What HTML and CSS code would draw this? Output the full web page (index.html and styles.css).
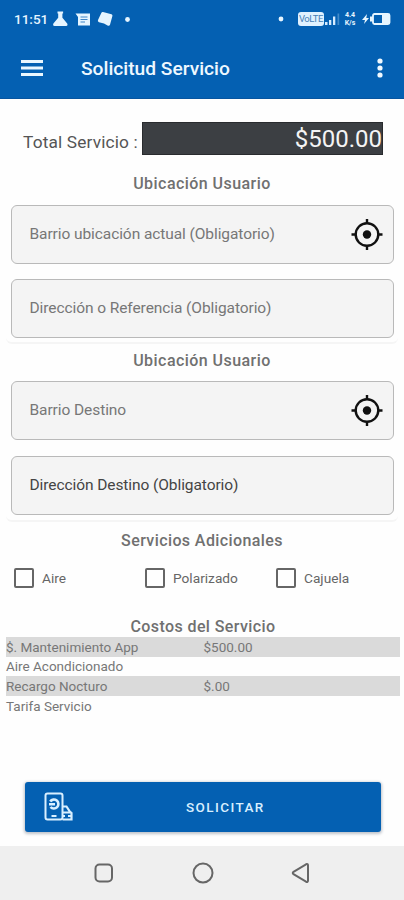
FILE: index.html
```html
<!DOCTYPE html>
<html lang="es">
<head>
<meta charset="utf-8">
<title>Solicitud Servicio</title>
<link rel="stylesheet" href="styles.css">
</head>
<body>
<header class="header">
  <div class="status">
    <span class="clock">11:51</span>
    <svg class="status-left" width="80" height="18" viewBox="0 0 80 18" fill="#e6f5ff">
      <path d="M4.500 1.500h5.600v2H9.400v4.300l4.800 5.700q1 2.500-1.200 2.500H1.700q-2.300 0-1.300-2.500l4.800-5.700V3.500h-.7z"/>
      <path d="M22.500 3.500H37v12H25V7z"/>
      <path d="M27.500 7h7M27.500 9.500h7M27.500 12h4.500" stroke="#3f86c8" stroke-width="1.200"/>
      <path d="M50 2l8.500 2.300q1.300.5.900 1.800L57 14.800q-.6 1.500-2 .9l-4-2.200-5-1.200q-1.700-.7-1-2.300l3.300-7q.5-1.300 1.700-1z"/>
      <circle cx="74.500" cy="9.500" r="2.400"/>
    </svg>
    <svg class="status-mid" width="6" height="18" viewBox="0 0 6 18" fill="#e6f5ff"><circle cx="3" cy="9" r="2.400"/></svg>
    <span class="volte">VoLTE</span>
    <svg class="signal" width="17" height="18" viewBox="0 0 17 18" fill="#d5ebff">
      <path d="M1 12h2.500v3H1zM5 10h2.300v5H5zM9 6.500h2.300V15H9z"/><path d="M13.500 3.500h1.700V15h-1.700z" opacity=".3"/>
    </svg>
    <span class="speed"><span>4.4</span><span>K/s</span></span>
    <svg class="battery" width="29" height="18" viewBox="0 0 29 18" fill="#e6f5ff">
      <path d="M5 4L0 10h3l-1 4 5-6H4.300z"/><path d="M8 6.500h3v5H8z"/>
      <rect x="11" y="4" width="16.500" height="10" rx="1.500" fill="none" stroke="#e6f5ff" stroke-width="1.800"/><path d="M20 4h7v10h-7z"/>
    </svg>
  </div>
  <div class="toolbar">
    <svg width="22" height="18" viewBox="0 0 22 18" fill="none" stroke="#eaf7ff" stroke-width="3"><path d="M0 2.500h22M0 9h22M0 15.500h22"/></svg>
    <h1>Solicitud Servicio</h1>
    <svg class="more" width="6" height="22" viewBox="0 0 6 22" fill="#f1f9ff"><circle cx="3" cy="4" r="2.600"/><circle cx="3" cy="11" r="2.600"/><circle cx="3" cy="18" r="2.600"/></svg>
  </div>
</header>
<main>
  <div class="total"><span class="total-label">Total Servicio :</span><output>$500.00</output></div>
  <section class="place">
    <h2>Ubicación Usuario</h2>
    <div class="field"><span>Barrio ubicación actual (Obligatorio)</span>
      <svg width="32" height="32" viewBox="0 0 32 32" fill="none" stroke="#111" stroke-width="2.400"><circle cx="16" cy="15.500" r="11.300"/><circle cx="16" cy="15.500" r="4.200" fill="#111" stroke="none"/><path d="M16 0v5M16 26v5M.5 15.500h5M26.500 15.500h5"/></svg>
    </div>
    <div class="field"><span>Dirección o Referencia (Obligatorio)</span></div>
  </section>
  <section class="place second">
    <h2>Ubicación Usuario</h2>
    <div class="field"><span>Barrio Destino</span>
      <svg width="32" height="32" viewBox="0 0 32 32" fill="none" stroke="#111" stroke-width="2.400"><circle cx="16" cy="15.500" r="11.300"/><circle cx="16" cy="15.500" r="4.200" fill="#111" stroke="none"/><path d="M16 0v5M16 26v5M.5 15.500h5M26.500 15.500h5"/></svg>
    </div>
    <div class="field filled"><span>Dirección Destino (Obligatorio)</span></div>
  </section>
  <section class="extras">
    <h2>Servicios Adicionales</h2>
    <div class="checks">
      <span class="check"><i></i><span>Aire</span></span>
      <span class="check"><i></i><span>Polarizado</span></span>
      <span class="check"><i></i><span>Cajuela</span></span>
    </div>
  </section>
  <section class="costs">
    <h2>Costos del Servicio</h2>
    <div class="row"><span>$. Mantenimiento App</span><span>$500.00</span></div>
    <div class="row"><span>Aire Acondicionado</span></div>
    <div class="row"><span>Recargo Nocturo</span><span>$.00</span></div>
    <div class="row"><span>Tarifa Servicio</span></div>
  </section>
  <div class="submit">
    <svg width="30" height="30" viewBox="0 0 30 30" fill="none" stroke="#d9efff" stroke-width="2">
      <rect x="2.500" y="1.500" width="17" height="26" rx="2"/>
      <path d="M7.200 9.500a4.500 4.500 0 1 1 .3 5.500M6 12.300h6" stroke-width="2.600"/><path d="M8.500 24h5"/>
      <path d="M19.500 14.500h4l3.300 5 1.700 1.500v6.500h-9M19.500 20.500h8M20 24h2M25 24h3" stroke-width="2.200"/>
    </svg>
    <span>SOLICITAR</span>
  </div>
</main>
<nav>
  <svg width="20" height="20" viewBox="0 0 20 20"><rect x="1.500" y="1.500" width="16.500" height="17" rx="4"/></svg>
  <svg width="22" height="22" viewBox="0 0 22 22"><circle cx="11" cy="11" r="9.500"/></svg>
  <svg width="20" height="22" viewBox="0 0 20 22"><path d="M2.500 9.800L15 2.300q2-.8 2 1.200v15q0 2-2 1.200L2.500 12.200q-1.500-1.200 0-2.400z"/></svg>
</nav>
</body>
</html>
```
FILE: styles.css
```css
* { box-sizing: border-box; }
body { margin: 0; width: 404px; height: 900px; overflow: hidden; display: flex; flex-direction: column; background: #fefefe; font-family: Roboto, sans-serif; color: #666; }
svg { display: block; flex: none; }
span, output, h1, h2 { white-space: nowrap; }
h1, h2 { margin: 0; }
.header { height: 99px; flex: none; background: #0460b2; border-bottom: 1px solid #0755a0; }
.status { height: 38px; display: flex; align-items: center; color: #e6f5ff; padding-left: 14px; }
.clock { width: 39px; font-size: 13.5px; font-weight: 500; }
.status-mid { margin-left: 145px; }
.volte { margin-left: 14px; width: 26px; height: 14px; border-radius: 3px; background: #e0f1ff; color: #467fb5; font-size: 9.5px; line-height: 14px; text-align: center; letter-spacing: -.4px; }
.speed { display: flex; flex-direction: column; gap: 1px; width: 14px; margin-left: 2px; font-size: 7px; line-height: 7px; font-weight: 700; text-align: center; }
.battery { margin-left: 5px; }
.toolbar { height: 60px; display: flex; align-items: center; padding: 0 21px; }
.toolbar h1 { margin-left: 38px; font-size: 19.2px; font-weight: 500; color: #eef8ff; line-height: 24px; padding-top: 1px; }
.more { margin-left: auto; }
main { flex: 1; display: flex; flex-direction: column; }
.total { display: flex; align-items: center; height: 33px; margin: 23px 0 0 23px; }
.total-label { width: 119px; font-size: 17.3px; letter-spacing: .15px; color: #555; padding-top: 6px; }
output { width: 241px; height: 33px; background: #3c3f43; color: #f4f4f4; border: 1px solid #292b2e; font-size: 24px; line-height: 33px; text-align: right; }
h2 { text-align: center; font-size: 16px; line-height: 20px; font-weight: 500; letter-spacing: .45px; color: #707070; }
.place { display: flex; flex-direction: column; margin: 0 6px; padding-top: 19px; height: 189px; border-bottom: 2px solid #f5f5f5; border-radius: 0 0 6px 6px; }
.place.second { padding-top: 7px; height: 178px; }
.field { height: 59px; flex: none; margin: 0 4px 0 5px; border: 1.5px solid #b9b9b9; border-radius: 6px; background: #f4f4f4; display: flex; align-items: center; justify-content: space-between; padding: 0 10px 0 17.5px; font-size: 15.5px; letter-spacing: -.08px; color: #777; }
.field span { padding-bottom: 1px; }
h2 + .field { margin-top: 11px; margin-bottom: 15px; }
.second h2 + .field { margin-top: 10px; margin-bottom: 16px; }
.filled { color: #444; }
.extras { height: 77px; margin-top: 9px; }
.extras h2 { letter-spacing: .4px; }
.checks { display: grid; grid-template-columns: 131px 131px 1fr; padding-left: 14px; margin-top: 17px; }
.check { display: flex; align-items: center; gap: 8px; font-size: 13.7px; color: #666; }
.check i { width: 20px; height: 20px; border: 2px solid #666; border-radius: 2px; }
.costs { margin: 9px 4px 0 6px; }
.costs h2 { letter-spacing: .4px; }
.row { height: 19.6px; display: grid; grid-template-columns: 197.5px 1fr; align-items: center; font-size: 13.5px; color: #777; }
.row:nth-of-type(odd) { background: #dadada; }
.submit { width: 356px; height: 50px; margin: 67px 0 0 25px; border-radius: 3px; background: #0460b2; box-shadow: 0 1px 3px 1px #bfc3ca; display: flex; align-items: center; padding-left: 18px; color: #d9efff; }
.submit span { margin-left: 113px; font-size: 13.5px; font-weight: 500; letter-spacing: 1.4px; }
nav { height: 54px; flex: none; background: #efefef; display: flex; align-items: center; padding: 0 93px 0 94px; justify-content: space-between; }
nav svg { fill: none; stroke: #666; stroke-width: 2; }
```
